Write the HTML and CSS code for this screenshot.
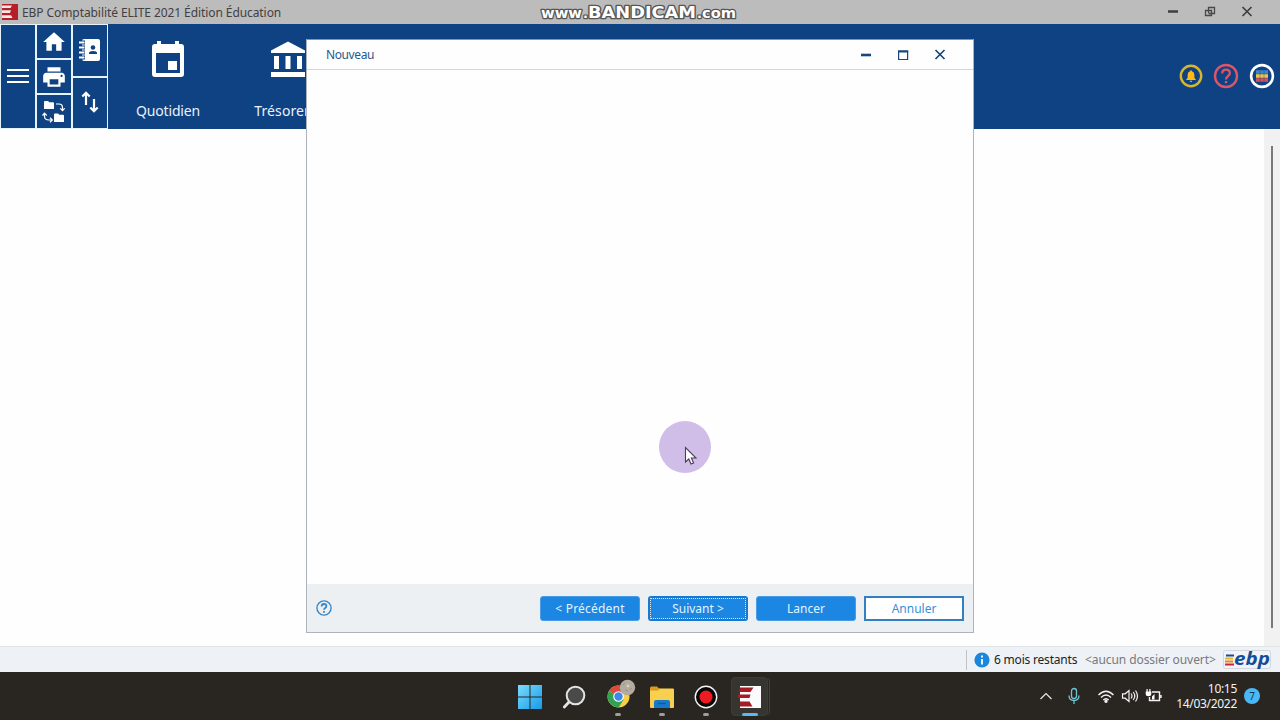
FILE: index.html
```html
<!DOCTYPE html>
<html lang="fr">

<head>
    <meta charset="UTF-8">
    <meta name="viewport" content="width=device-width, initial-scale=1.0">
    <title>EBP Comptabilité ELITE 2021 Édition Éducation</title>
    <link rel="stylesheet" href="styles.css">
</head>

<body>
    <div id="screen">
        <header class="titlebar">
            <svg class="app-icon" width="16" height="16" viewBox="0 0 16 16">
                <rect width="16" height="16" fill="#b51f2a" />
                <path d="M0 1.500H10L8.500 4H0zM0 6.300H9L8 9H0zM0 11.300H9L10.500 14H0z" fill="#f3e6e4" />
            </svg>
            <h1>EBP Comptabilité ELITE 2021 Édition Éducation</h1>
            <div class="win-buttons">
                <svg width="12" height="12" viewBox="0 0 12 12"><path d="M1 5.500h10" stroke="#3f3f3f" stroke-width="2.500" /></svg>
                <svg width="12" height="12" viewBox="0 0 12 12" fill="none" stroke="#484848" stroke-width="1.300"><path d="M1.500 4.500h6v5h-6zM4.500 7V1.500h6v6H4.500" /></svg>
                <svg width="12" height="12" viewBox="0 0 12 12"><path d="M1.500 1l9 9M10.500 1l-9 9" stroke="#3f3f3f" stroke-width="1.700" /></svg>
            </div>
        </header>

        <nav class="ribbon">
            <div class="tiles">
                <div class="col">
                    <div class="tile">
                        <svg width="22" height="16" viewBox="0 0 22 16"><path d="M0 1h22M0 7h22M0 13h22" stroke="#fff" stroke-width="1.800" /></svg>
                    </div>
                </div>
                <div class="col">
                    <div class="tile">
                        <svg width="26" height="26" viewBox="0 0 24 24" fill="#fff"><path d="M10 20v-6h4v6h5v-8h3L12 3 2 12h3v8z" /></svg>
                    </div>
                    <div class="tile">
                        <svg width="26" height="26" viewBox="0 0 24 24" fill="#fff"><path d="M19 8H5c-1.660 0-3 1.340-3 3v6h4v4h12v-4h4v-6c0-1.660-1.340-3-3-3zm-3 11H8v-5h8v5zm3-7c-.55 0-1-.45-1-1s.45-1 1-1 1 .45 1 1-.45 1-1 1zm-1-9H6v4h12V3z" /></svg>
                    </div>
                    <div class="tile">
                        <svg width="24" height="24" viewBox="0 0 24 24" fill="#fff">
                            <path d="M2 2q0-1 1-1h3l1.300 1.300H11q1 0 1 1V9H2zM12 14.500q0-1 1-1h3l1.300 1.300H21q1 0 1 1V22H12z" />
                            <path d="M14 4h3q3.500 0 3.500 3.500V10M18.300 8.300l2.200 2.400 2.200-2.400M10 20H7q-4.500 0-4.500-3.500V14M.5 15.500l2-2.400 2.200 2.400M8 17.800l2.300 2.200L8 22.200" fill="none" stroke="#fff" stroke-width="1.200" />
                        </svg>
                    </div>
                </div>
                <div class="col">
                    <div class="tile">
                        <svg width="22" height="24" viewBox="0 0 22 24">
                            <rect x="3" y="1" width="18" height="22" rx="2" fill="#fff" />
                            <path d="M1 4.500h5M1 9.500h5M1 14.500h5M1 19.500h5" stroke="#0e4283" stroke-width="3.800" />
                            <path d="M0 4.500h5.500M0 9.500h5.500M0 14.500h5.500M0 19.500h5.500" stroke="#fff" stroke-width="2" />
                            <circle cx="14" cy="9.500" r="2.300" fill="#0e4283" />
                            <path d="M10 16v-1q0-2 4-2t4 2v1z" fill="#0e4283" />
                        </svg>
                    </div>
                    <div class="tile">
                        <svg width="20" height="24" viewBox="0 0 20 24" fill="none" stroke="#fff" stroke-width="2.200"><path d="M6 14V2M2.300 5.500L6 1.800l3.700 3.700M14 8v12M10.300 16.500l3.700 3.700 3.700-3.700" /></svg>
                    </div>
                </div>
            </div>

            <div class="modules">
                <div class="module">
                    <svg width="34" height="38" viewBox="0 0 34 38">
                        <path d="M4 4h2V1h4v3h14V1h4v3h2q3 0 3 3v27q0 3-3 3H4q-3 0-3-3V7q0-3 3-3z" fill="#fff" />
                        <rect x="5" y="13" width="24" height="20" fill="#0e4283" />
                        <rect x="17" y="21" width="9" height="9" fill="#fff" />
                    </svg>
                    <span>Quotidien</span>
                </div>
                <div class="module">
                    <svg width="34" height="38" viewBox="0 0 34 38" fill="#fff"><path d="M0 10.500L17 1.500l17 9V13H0zM3 16h5v13H3zM14.500 16h5v13h-5zM26 16h5v13h-5zM0 32h34v5H0z" /></svg>
                    <span>Trésorerie</span>
                </div>
            </div>

            <div class="tools">
                <svg width="24" height="24" viewBox="0 0 24 24">
                    <circle cx="12" cy="12" r="10.200" fill="none" stroke="#d9b52f" stroke-width="2.400" />
                    <path d="M12 6.300q.9 0 .9 1 2.500.8 2.500 3.700v3l1.300 1.300v.7H7.300v-.7L8.600 14v-3q0-2.900 2.500-3.700 0-1 .9-1zM10.700 16.700h2.600q-.2 1.200-1.300 1.200t-1.300-1.200z" fill="#fdbb13" />
                </svg>
                <svg width="26" height="26" viewBox="0 0 26 26" fill="none" stroke="#dc5669">
                    <circle cx="13" cy="13" r="11" stroke-width="2.400" />
                    <path d="M9.200 10.500q0-3.800 3.800-3.800t3.800 3.500q0 1.700-1.900 3.100T13 16.500M13 18v2.300" stroke-width="2.300" />
                </svg>
                <svg width="26" height="26" viewBox="0 0 26 26">
                    <circle cx="13" cy="13" r="10.900" fill="none" stroke="#fff" stroke-width="2.600" />
                    <path d="M7 9h12" stroke="#3d86cf" stroke-width="3.600" />
                    <path d="M7 13h12" stroke="#e6c94c" stroke-width="3.600" />
                    <path d="M7 17h12" stroke="#d84f5d" stroke-width="3.600" />
                    <path d="M11 7v12M15 7v12" stroke="#0e4283" stroke-width=".4" />
                </svg>
            </div>
        </nav>

        <main class="workspace">
            <div class="scrollbar"><div class="thumb"></div></div>
        </main>

        <footer class="statusbar">
            <svg width="16" height="16" viewBox="0 0 16 16">
                <circle cx="8" cy="8" r="7.600" fill="#1a86dc" />
                <path d="M8 3.500v2M8 7v5.500" stroke="#fff" stroke-width="1.800" />
            </svg>
            <span class="remaining">6 mois restants</span>
            <span class="folder">&lt;aucun dossier ouvert&gt;</span>
            <svg class="ebp" width="49" height="24" viewBox="0 -2 49 24">
                <rect x=".5" y=".5" width="47" height="18" rx="2" fill="#f1f3f8" stroke="#d3d7de" />
                <path d="M3 5.500h8" stroke="#174d97" stroke-width="2" />
                <path d="M2 8.500h8" stroke="#e5b822" stroke-width="2" />
                <path d="M2 11.500h8" stroke="#e88728" stroke-width="2" />
                <path d="M2 14.500h9" stroke="#ca2639" stroke-width="2" />
                <text x="11" y="14.500" textLength="36" lengthAdjust="spacingAndGlyphs">ebp</text>
            </svg>
        </footer>

        <div class="taskbar">
            <div class="apps">
                <div class="app">
                    <svg width="24" height="24" viewBox="0 0 24 24">
                        <defs>
                            <linearGradient id="win" x1="0" y1="0" x2="24" y2="24" gradientUnits="userSpaceOnUse">
                                <stop offset="0" stop-color="#7bdcfb" />
                                <stop offset="1" stop-color="#169bea" />
                            </linearGradient>
                        </defs>
                        <path d="M0 0h11.500v11.500H0zM12.500 0H24v11.500H12.500zM0 12.500h11.500V24H0zM12.500 12.500H24V24H12.500z" fill="url(#win)" />
                    </svg>
                </div>
                <div class="app">
                    <svg width="24" height="24" viewBox="0 0 24 24">
                        <path d="M7.500 16.500L2.300 22" stroke="#e3e3e3" stroke-width="2.800" stroke-linecap="round" />
                        <circle cx="13.500" cy="10.500" r="8.800" fill="#4a4a49" stroke="#e3e3e3" stroke-width="2" />
                    </svg>
                </div>
                <div class="app run">
                    <svg class="chrome" width="30" height="30" viewBox="0 0 30 30">
                        <circle cx="12.500" cy="17.500" r="11" fill="#f8cf45" />
                        <path d="M12.500 17.500L3 12A11 11 0 0 1 22 12z" fill="#dd4a3d" />
                        <path d="M12.500 17.500L3 12a11 11 0 0 0 9.500 16.500l5.200-8z" fill="#2fa352" />
                        <circle cx="12.500" cy="17.500" r="5.300" fill="#fff" />
                        <circle cx="12.500" cy="17.500" r="4.200" fill="#4087ec" />
                        <circle cx="21.500" cy="8.500" r="7.700" fill="#b3aaa0" />
                        <path d="M17 6l2-2M19 11l3 1M24 11l2-2" stroke="#9b9187" fill="none" />
                        <circle cx="22" cy="7" r="1.400" fill="#d9d2c9" />
                    </svg>
                </div>
                <div class="app run">
                    <svg width="26" height="24" viewBox="0 0 26 24">
                        <rect x="1" y="3.500" width="24" height="19.500" rx="1" fill="#f9cf50" />
                        <path d="M1 5.500h8L11 3.500H10L8 1.500H2.500Q1 1.500 1 3z" fill="#d99b20" />
                        <path d="M5 23v-6q0-2 2-2h12q2 0 2 2v6z" fill="#1879ca" />
                        <path d="M9 18.500h8" stroke="#0c5b9f" stroke-width="1.400" />
                    </svg>
                </div>
                <div class="app run">
                    <svg width="24" height="24" viewBox="0 0 24 24">
                        <circle cx="12" cy="12" r="10.700" fill="#070707" stroke="#f5f5f5" stroke-width="1.400" />
                        <circle cx="12" cy="12" r="6.500" fill="#ee1c20" />
                    </svg>
                </div>
                <div class="app run current">
                    <svg width="24" height="22" viewBox="0 0 24 22">
                        <rect x="2" width="21" height="22" fill="#fbfbfd" />
                        <path d="M2 1.500h13.500L12.500 6H1zM0 8.500h12.500L11.500 12H0zM2 15.500h9.500l3 5H2z" fill="#a51c25" />
                    </svg>
                </div>
            </div>
            <div class="tray">
                <svg width="14" height="14" viewBox="0 0 14 14"><path d="M1.500 10L7 4.500l5.500 5.500" fill="none" stroke="#e8e8e8" stroke-width="1.200" /></svg>
                <svg class="mic" width="14" height="18" viewBox="0 0 14 18" fill="none" stroke="#6fc4d3" stroke-width="1.300"><rect x="4.500" y="1.500" width="5" height="10" rx="2.500" /><path d="M2 8.500q0 5 5 5t5-5M7 13.500V17" /></svg>
                <svg class="wifi" width="18" height="16" viewBox="0 0 18 16" fill="none" stroke="#f2f2f2" stroke-width="1.400"><path d="M1.500 7q7.500-7.500 15 0M4 9.500q5-5 10 0M6.300 12q2.700-2.600 5.400 0" /><circle cx="9" cy="13.300" r="1" fill="#fff" /></svg>
                <svg class="sound" width="18" height="16" viewBox="0 0 18 16" fill="none" stroke="#f2f2f2" stroke-width="1.200"><path d="M1.500 5.800h2.700L8 2.500v11l-3.800-3.300H1.500zM10 5.500q2 2.500 0 5M12.200 4q3.200 4 0 8M14.500 2.500q4 5.500 0 11" /></svg>
                <svg class="battery" width="18" height="16" viewBox="0 0 18 16"><path d="M7 4h7.500v8.500H4.500V9M16 7v3" fill="none" stroke="#f2f2f2" stroke-width="1.400" /><path d="M.7 3.500h5.600v2.300q0 2.500-2.800 2.500T.7 5.800zM1.500 1h1.200v3H1.500zM4.300 1h1.200v3H4.300zM7 8.500L9.500 6v5.500H7z" fill="#fff" /></svg>
                <div class="clock">
                    <span>10:15</span>
                    <span>14/03/2022</span>
                </div>
                <span class="badge">7</span>
            </div>
        </div>

        <section class="dialog">
            <div class="dialog-head">
                <h2>Nouveau</h2>
                <div class="dialog-buttons">
                    <svg width="12" height="12" viewBox="0 0 12 12"><path d="M1 6h10" stroke="#174677" stroke-width="2.600" /></svg>
                    <svg width="12" height="12" viewBox="0 0 12 12"><path d="M1.600 2h9v8.500h-9z" fill="none" stroke="#174677" stroke-width="1.200" /><path d="M1 2.500h10.200" stroke="#174677" stroke-width="2" /></svg>
                    <svg width="12" height="12" viewBox="0 0 12 12"><path d="M1.500 1l9 9M10.500 1l-9 9" stroke="#174677" stroke-width="1.700" /></svg>
                </div>
            </div>
            <div class="dialog-body"></div>
            <div class="dialog-foot">
                <svg width="16" height="16" viewBox="0 0 16 16" fill="none" stroke="#3788c8">
                    <circle cx="8" cy="8" r="7.100" stroke-width="1.400" />
                    <path d="M5.600 6.500q0-2.500 2.400-2.500t2.400 2.100q0 1-1.200 1.900T8 9.800M8 11v1.700" stroke-width="1.800" />
                </svg>
                <div class="actions">
                    <button class="prev">&lt; Précédent</button>
                    <button class="focus">Suivant &gt;</button>
                    <button>Lancer</button>
                    <button class="cancel">Annuler</button>
                </div>
            </div>
        </section>

        <svg class="watermark" width="204" height="20" viewBox="0 0 204 20">
            <text x="11" y="18" textLength="41" lengthAdjust="spacingAndGlyphs" font-size="14">www</text>
            <text x="53" y="18" font-size="13">.</text>
            <text x="58" y="18" textLength="108" lengthAdjust="spacingAndGlyphs" font-size="15">BANDICAM</text>
            <text x="167" y="18" font-size="13">.</text>
            <text x="172" y="18" textLength="34" lengthAdjust="spacingAndGlyphs" font-size="14">com</text>
        </svg>

        <div class="pointer">
            <svg width="14" height="20" viewBox="0 0 14 20"><path d="M1.500 1.500v14.500l3.300-3 2.200 5 2.600-1.100-2.200-4.900h4.600z" fill="#fff" stroke="#4a3d59" stroke-width="1.100" /></svg>
        </div>
    </div>
</body>

</html>
```
FILE: styles.css
```css
* {
    margin: 0;
    padding: 0;
    box-sizing: border-box;
}

body {
    font-family: "Noto Sans", "Open Sans", sans-serif;
    font-size: 12px;
    overflow: hidden;
}

svg {
    display: block;
    flex: none;
}

#screen {
    position: relative;
    display: flex;
    flex-direction: column;
    width: 1280px;
    height: 720px;
    background-color: #fefefe;
    overflow: hidden;
    white-space: nowrap;
}

/* title bar */
.titlebar {
    display: flex;
    align-items: center;
    height: 24px;
    padding: 0 27px 0 2px;
    background-color: #bcbcbc;
}

.titlebar h1 {
    margin-left: 4px;
    font-size: 12px;
    font-weight: normal;
    letter-spacing: -.08px;
    color: #414141;
}

.win-buttons {
    display: flex;
    gap: 25px;
    margin-left: auto;
}

/* ribbon */
.ribbon {
    display: flex;
    height: 105px;
    background-color: #0e4283;
}

.tiles {
    display: flex;
    gap: 2px;
    width: 108px;
    padding: 1px;
    background-color: #e5f4fc;
}

.col {
    display: flex;
    flex: 1;
    flex-direction: column;
    gap: 2px;
}

.tile {
    display: flex;
    flex: 1;
    align-items: center;
    justify-content: center;
    background-color: #0e4283;
}

.modules {
    display: flex;
}

.module {
    display: flex;
    flex-direction: column;
    align-items: center;
    width: 120px;
    padding-top: 16px;
    color: #e9f1fb;
    font-size: 14px;
    letter-spacing: -.15px;
}

.module span {
    margin-top: 23px;
    line-height: 20px;
}

.module + .module {
    letter-spacing: .1px;
}

.tools {
    display: flex;
    align-items: center;
    gap: 10px;
    margin-left: auto;
    padding: 0 5px 1px 0;
}

/* workspace */
.workspace {
    display: flex;
    flex: 1;
    justify-content: flex-end;
}

.scrollbar {
    width: 16px;
    padding: 17px 0 0 7px;
    background-color: #f1f1f2;
}

.thumb {
    width: 2px;
    height: 482px;
    background-color: #78797b;
}

/* status bar */
.statusbar {
    display: flex;
    align-items: center;
    height: 26px;
    padding-left: 974px;
    border-top: 1px solid #e2e5e8;
    background: linear-gradient(#bfc3c8, #bfc3c8) 966px 3px / 1px 20px no-repeat #eef1f5;
}

.remaining {
    width: 91px;
    margin-left: 4px;
    letter-spacing: -.2px;
    color: #222;
}

.folder {
    width: 130px;
    letter-spacing: -.08px;
    color: #77797d;
}

.ebp {
    margin-left: 8px;
    overflow: visible;
    fill: #174d97;
    font: italic bold 17px "Open Sans", sans-serif;
}

/* taskbar */
.taskbar {
    display: flex;
    height: 48px;
    padding-left: 508px;
    background-color: #292622;
}

.apps {
    display: flex;
}

.app {
    position: relative;
    display: flex;
    align-items: center;
    justify-content: center;
    width: 44px;
    height: 48px;
    padding-top: 2px;
}

.chrome {
    margin: -7px -5px 0 0;
}

.run::after {
    content: "";
    position: absolute;
    bottom: 4px;
    left: 19px;
    width: 6px;
    height: 3px;
    border-radius: 2px;
    background-color: #a09c98;
}

.current {
    width: 37px;
    height: 39px;
    margin: 5px 0 0 3px;
    padding-top: 0;
    border: 1px solid #3d3b39;
    border-radius: 4px;
    background-color: #37352f;
    box-shadow: 2px 0 0 -1px #292622, 3px 0 0 -1px #45423f;
}

.current::after {
    bottom: -1px;
    left: 10px;
    width: 16px;
    background-color: #5bb9ed;
}

.tray {
    display: flex;
    align-items: center;
    margin-left: auto;
    padding-right: 20px;
}

.mic {
    margin-left: 14px;
}

.wifi {
    margin-left: 16px;
}

.sound,
.battery {
    margin-left: 6px;
}

.clock {
    display: flex;
    flex-direction: column;
    width: 74px;
    color: #f3f3f3;
    letter-spacing: -.3px;
    text-align: right;
    line-height: 15px;
}

.badge {
    width: 16px;
    height: 16px;
    margin-left: 7px;
    border-radius: 50%;
    background-color: #4ab8f5;
    color: #14384f;
    font-size: 10px;
    line-height: 16px;
    text-align: center;
}

/* dialog */
.dialog {
    position: absolute;
    top: 39px;
    left: 306px;
    display: flex;
    flex-direction: column;
    width: 668px;
    height: 594px;
    border: 1px solid #aeb2bb;
    border-top-color: #6f9cc5;
    background-color: #fefefe;
}

.dialog-head {
    display: flex;
    align-items: center;
    height: 30px;
    padding: 0 27px 0 19px;
    border-bottom: 1px solid #d5d5d8;
}

.dialog-head h2 {
    font-size: 12px;
    font-weight: normal;
    letter-spacing: -.4px;
    color: #28588f;
}

.dialog-buttons {
    display: flex;
    gap: 25px;
    margin-left: auto;
}

.dialog-body {
    flex: 1;
}

.dialog-foot {
    display: flex;
    align-items: center;
    justify-content: space-between;
    height: 48px;
    padding: 0 9px;
    background-color: #edf0f3;
}

.actions {
    display: flex;
    gap: 8px;
}

button {
    width: 100px;
    height: 25px;
    border: 1px solid #4a9be5;
    border-radius: 3px;
    background-color: #1c86e3;
    color: #e3f4ff;
    font: 12px "Noto Sans", sans-serif;
}

.prev {
    letter-spacing: .2px;
}

.focus {
    border: 2px solid #1c78ca;
    outline: 1px dotted #d4ecff;
    outline-offset: -3px;
}

.cancel {
    border: 2px solid #3280c3;
    border-radius: 0;
    background-color: #fff;
    color: #3a8fd5;
}

/* recorder overlay */
.watermark {
    position: absolute;
    top: 0;
    left: 530px;
    overflow: visible;
    fill: #fff;
    stroke: #555;
    stroke-width: 2.5px;
    stroke-linejoin: round;
    paint-order: stroke;
    font-family: "DejaVu Sans", sans-serif;
    font-weight: bold;
}

.pointer {
    position: absolute;
    top: 421px;
    left: 659px;
    width: 52px;
    height: 52px;
    padding: 25px 0 0 25px;
    border-radius: 50%;
    background-color: #d0bde8;
}
```
